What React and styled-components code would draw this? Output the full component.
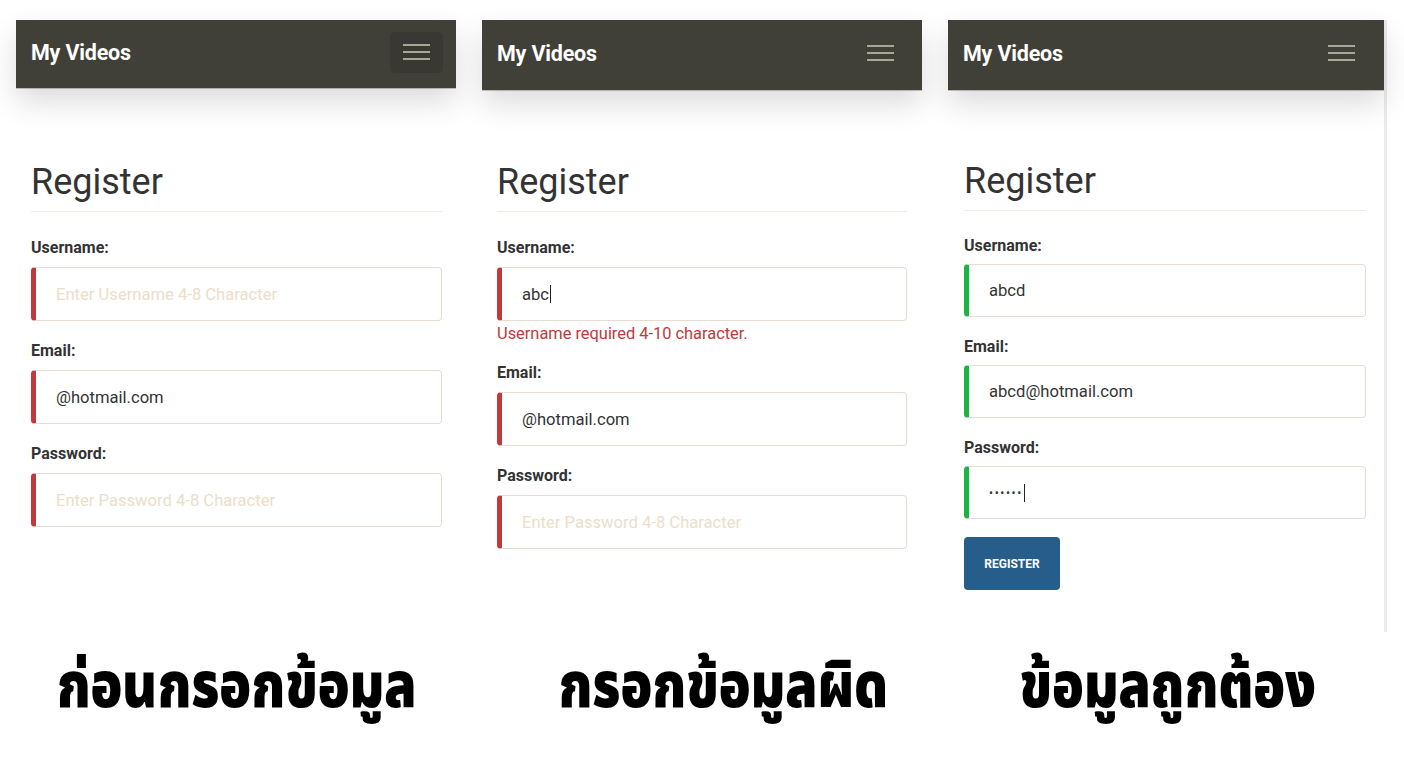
import React from "react";
import styled, { createGlobalStyle } from "styled-components";

const Global = createGlobalStyle`
  html, body { margin: 0; background: #fff; }
  body { font-family: Roboto, "Liberation Sans", Arial, sans-serif; color: #333; }
`;

const Page = styled.main`
  display: flex;
  gap: 26px;
  padding: 20px 0 0 16px;
`;

const Column = styled.section`
  display: flex;
  flex-direction: column;
  width: ${(p) => p.$w}px;
`;

const Panel = styled.div`
  height: 612px;
  box-sizing: border-box;
  background: #fff;
  border-right: ${(p) => (p.$edge ? "3px solid #ebebeb" : "none")};
`;

const NavBar = styled.header`
  position: relative;
  z-index: 1;
  height: ${(p) => p.$h}px;
  box-sizing: border-box;
  display: flex;
  align-items: center;
  justify-content: space-between;
  padding: 0 ${(p) => p.$right}px 4px 15px;
  background: #403f38;
  box-shadow: 0 1px 0 rgba(0, 0, 0, 0.22), 0 14px 30px rgba(0, 0, 0, 0.14);
`;

const Brand = styled.span`
  font-size: 21.5px;
  font-weight: 700;
  color: #fff;
  letter-spacing: -0.2px;
`;

const MenuButton = styled.button`
  width: 53px;
  height: 41px;
  display: flex;
  flex-direction: column;
  align-items: center;
  justify-content: center;
  gap: 5px;
  padding: 0;
  border: none;
  border-radius: 5px;
  background: ${(p) => (p.$boxed ? "#393832" : "transparent")};
`;

const MenuLine = styled.span`
  display: block;
  width: 27px;
  height: 2px;
  background: #a9a797;
`;

const Content = styled.div`
  padding: 0 ${(p) => p.$right || 14}px 0 ${(p) => p.$left || 15}px;
`;

const Title = styled.h1`
  margin: ${(p) => p.$top}px 0 0;
  padding-bottom: 9px;
  border-bottom: 1px solid #f0ece5;
  font-size: 36px;
  font-weight: 400;
  line-height: 40px;
  color: #333;
`;

const Form = styled.form`
  --label-gap: ${(p) => (p.$dense ? 8 : 9)}px;
  --input-h: ${(p) => (p.$dense ? 53 : 54)}px;
  display: flex;
  flex-direction: column;
  padding-top: ${(p) => (p.$dense ? 25 : 26)}px;
`;

const Field = styled.div`
  & + & {
    margin-top: 20px;
  }
`;

const Label = styled.label`
  display: block;
  margin-bottom: var(--label-gap);
  font-size: 16px;
  font-weight: 700;
  line-height: 20px;
  color: #333;
`;

const InputBox = styled.div`
  height: var(--input-h);
  box-sizing: border-box;
  display: flex;
  align-items: center;
  padding: 0 20px;
  border: 1px solid #e6ddd0;
  border-left: 5px solid ${(p) => (p.$valid ? "#1cb344" : "#c0393b")};
  border-radius: 4px;
  font-size: 16.6px;
  color: ${(p) => (p.$placeholder ? "#ebdecb" : "#333")};
`;

const Dots = styled.span`
  font-size: 12px;
  letter-spacing: 1.6px;
  color: #333;
`;

const Caret = styled.span`
  display: inline-block;
  width: 1px;
  height: 18px;
  margin-left: 1px;
  background: #222;
`;

const ErrorText = styled.div`
  margin-top: 3px;
  font-size: 16.4px;
  line-height: 19px;
  color: #c0393b;
`;

const ButtonRow = styled.div`
  padding-top: 18px;
`;

const SubmitButton = styled.button`
  width: 96px;
  height: 53px;
  border: none;
  border-radius: 4px;
  background: #275d8b;
  color: #fff;
  font-family: Roboto, "Liberation Sans", Arial, sans-serif;
  font-size: 12px;
  font-weight: 700;
`;

const Caption = styled.h2`
  margin: 11px 0 0;
  padding-left: ${(p) => p.$shift || 0}px;
  text-align: center;
  white-space: nowrap;
  font-family: "Noto Sans Thai", "Noto Sans", "DejaVu Sans", sans-serif;
  font-size: 64px;
  font-weight: 900;
  line-height: 90px;
  color: #000;
`;

const CaptionText = styled.span`
  display: inline-block;
  transform: scaleX(0.82);
`;

function Nav({ h, boxed, right }) {
  return (
    <NavBar $h={h} $right={right}>
      <Brand>My Videos</Brand>
      <MenuButton type="button" $boxed={boxed} aria-label="menu">
        <MenuLine />
        <MenuLine />
        <MenuLine />
      </MenuButton>
    </NavBar>
  );
}

export default function App() {
  return (
    <>
      <Global />
      <Page>
        <Column $w={440}>
          <Panel>
            <Nav h={68} boxed right={13} />
            <Content>
              <Title $top={74}>Register</Title>
              <Form>
                <Field>
                  <Label>Username:</Label>
                  <InputBox $placeholder>Enter Username 4-8 Character</InputBox>
                </Field>
                <Field>
                  <Label>Email:</Label>
                  <InputBox>@hotmail.com</InputBox>
                </Field>
                <Field>
                  <Label>Password:</Label>
                  <InputBox $placeholder>Enter Password 4-8 Character</InputBox>
                </Field>
              </Form>
            </Content>
          </Panel>
          <Caption>
            <CaptionText>ก่อนกรอกข้อมูล</CaptionText>
          </Caption>
        </Column>

        <Column $w={440}>
          <Panel>
            <Nav h={70} right={15} />
            <Content $right={15}>
              <Title $top={72}>Register</Title>
              <Form>
                <Field>
                  <Label>Username:</Label>
                  <InputBox>
                    abc
                    <Caret />
                  </InputBox>
                  <ErrorText>Username required 4-10 character.</ErrorText>
                </Field>
                <Field>
                  <Label>Email:</Label>
                  <InputBox>@hotmail.com</InputBox>
                </Field>
                <Field>
                  <Label>Password:</Label>
                  <InputBox $placeholder>Enter Password 4-8 Character</InputBox>
                </Field>
              </Form>
            </Content>
          </Panel>
          <Caption $shift={40}>
            <CaptionText>กรอกข้อมูลผิด</CaptionText>
          </Caption>
        </Column>

        <Column $w={439}>
          <Panel $edge>
            <Nav h={70} right={16} />
            <Content $left={16} $right={18}>
              <Title $top={71}>Register</Title>
              <Form $dense>
                <Field>
                  <Label>Username:</Label>
                  <InputBox $valid>abcd</InputBox>
                </Field>
                <Field>
                  <Label>Email:</Label>
                  <InputBox $valid>abcd@hotmail.com</InputBox>
                </Field>
                <Field>
                  <Label>Password:</Label>
                  <InputBox $valid>
                    <Dots>••••••</Dots>
                    <Caret />
                  </InputBox>
                </Field>
                <ButtonRow>
                  <SubmitButton type="button">REGISTER</SubmitButton>
                </ButtonRow>
              </Form>
            </Content>
          </Panel>
          <Caption>
            <CaptionText>ข้อมูลถูกต้อง</CaptionText>
          </Caption>
        </Column>
      </Page>
    </>
  );
}
